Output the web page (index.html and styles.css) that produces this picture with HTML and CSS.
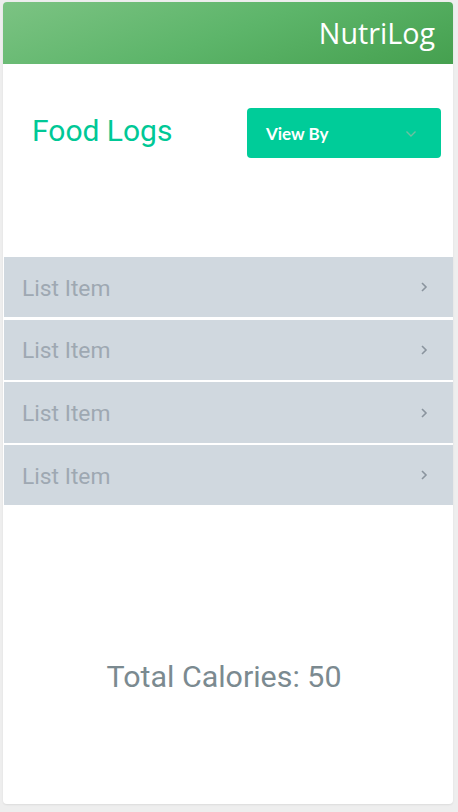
FILE: index.html
```html
<!DOCTYPE html>
<html>
<head>
<meta charset="utf-8">
<link rel="stylesheet" href="styles.css">
</head>
<body>
<div class="card">
  <header class="topbar"><span class="brand">NutriLog</span></header>
  <div class="titlerow">
    <h1 class="title">Food Logs</h1>
    <button class="viewby"><span>View By</span>
      <svg class="caret" width="12" height="8" viewBox="0 0 12 8"><path d="M1.5 1.5 L6 6 L10.5 1.5" fill="none" stroke="#6fbfa0" stroke-width="1.4"/></svg>
    </button>
  </div>
  <ul class="list">
    <li class="item"><span>List Item</span><svg class="chev" width="8" height="12" viewBox="0 0 8 12"><path d="M2 2 L6 6 L2 10" fill="none" stroke="#8a949e" stroke-width="1.6"/></svg></li>
    <li class="item"><span>List Item</span><svg class="chev" width="8" height="12" viewBox="0 0 8 12"><path d="M2 2 L6 6 L2 10" fill="none" stroke="#8a949e" stroke-width="1.6"/></svg></li>
    <li class="item"><span>List Item</span><svg class="chev" width="8" height="12" viewBox="0 0 8 12"><path d="M2 2 L6 6 L2 10" fill="none" stroke="#8a949e" stroke-width="1.6"/></svg></li>
    <li class="item"><span>List Item</span><svg class="chev" width="8" height="12" viewBox="0 0 8 12"><path d="M2 2 L6 6 L2 10" fill="none" stroke="#8a949e" stroke-width="1.6"/></svg></li>
  </ul>
  <div class="total">Total Calories: 50</div>
</div>
</body>
</html>
```
FILE: styles.css
```css
html, body { margin: 0; padding: 0; }
body {
  background: #eeeeee;
  width: 458px;
  height: 812px;
  font-family: Roboto, "Liberation Sans", sans-serif;
}
.card {
  margin: 2px 5px 0 3px;
  height: 802px;
  background: #fff;
  border-radius: 4px;
  box-shadow: 0 1px 2px rgba(0,0,0,0.08);
  display: flex;
  flex-direction: column;
}
.topbar {
  height: 62px;
  border-radius: 4px 4px 0 0;
  background: linear-gradient(160deg, #7cc383 0%, #5db56a 50%, #45a04f 100%);
  display: flex;
  align-items: center;
  justify-content: flex-end;
  padding-right: 18px;
}
.brand {
  color: #fff;
  font-family: "Open Sans", sans-serif;
  font-size: 28.7px;
  margin-top: -2px;
}
.titlerow {
  display: flex;
  justify-content: space-between;
  align-items: center;
  padding: 44px 12px 0 29px;
}
.title {
  margin: 0;
  font-weight: 400;
  font-size: 30px;
  color: #00c896;
  margin-top: -5px;
}
.viewby {
  width: 194px;
  height: 50px;
  border: 0;
  border-radius: 4px;
  background: #00cc99;
  color: #fff;
  font-family: Lato, sans-serif;
  font-weight: 700;
  font-size: 17px;
  display: flex;
  align-items: center;
  justify-content: space-between;
  padding: 0 24px 0 19px;
}
.caret { margin-top: 2px; }
.list {
  list-style: none;
  margin: 99px 0 0 1px;
  padding: 0;
  display: flex;
  flex-direction: column;
  gap: 2.3px;
}
.item {
  height: 60.4px;
  background: #d0d8df;
  display: flex;
  align-items: center;
  justify-content: space-between;
  padding: 0 25px 0 18px;
  color: #9ea8b2;
  font-size: 22.8px;
}
.item span { margin-top: 2px; }
.total {
  margin-top: 154px;
  padding-right: 8px;
  text-align: center;
  font-size: 30.4px;
  color: #7b8a90;
}
```
